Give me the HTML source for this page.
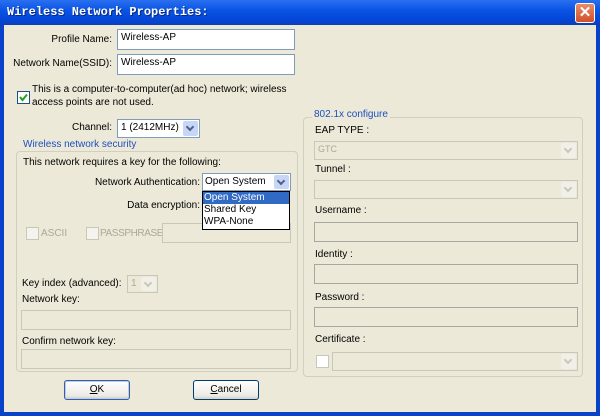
<!DOCTYPE html>
<html><head><style>
*{box-sizing:border-box;margin:0;padding:0}
body{width:600px;height:416px;overflow:hidden;font-family:Tahoma,"Liberation Sans",sans-serif;font-size:10px;color:#000;position:relative;background:#0842c9}
.a{position:absolute}
#title{left:0;top:0;width:600px;height:25px;background:linear-gradient(#2a6ff0,#0a55e4 40%,#0445d8 80%,#0a3fb8);}
#title span{position:absolute;left:7px;top:5px;color:#fff;font-family:"Liberation Mono",monospace;font-weight:bold;font-size:12px;text-shadow:1px 1px #0a2a80}
#close{left:575px;top:3px;width:20px;height:20px;border:1px solid #fff;border-radius:3px;background:linear-gradient(#e88c6a,#d2502a);color:#fff;font-size:15px;font-weight:bold;text-align:center;line-height:18px}
#body{left:4px;top:25px;width:592px;height:387px;background:#ece9d8}
.in{position:absolute;background:#fff;border:1px solid #7f9db9;padding:2px 3px;font-size:10px}
.dis{position:absolute;background:#ece9d8;border:1px solid #c9c7ba}
.lbl{position:absolute;white-space:nowrap}
.r{text-align:right}
.grp{position:absolute;border:1px solid #d0d0bf;border-radius:4px}
.gl{position:absolute;color:#1e4fbf;background:#ece9d8;padding:0 2px;white-space:nowrap}
.arr{position:absolute;right:1px;top:1px;bottom:1px;width:15px;background:#c7d6f7;border-radius:2px}
.arr:after{content:"";position:absolute;left:4px;top:3px;width:4px;height:4px;border-right:2px solid #4d6185;border-bottom:2px solid #4d6185;transform:rotate(45deg)}
.darr{background:#f0efe8}
.darr:after{border-color:#c9c7ba}
.cb{position:absolute;width:13px;height:13px;border:1px solid #1c5180;background:#fff}
.dcb{border-color:#c9c7ba;background:#f4f3ee}
.btn{position:absolute;width:66px;height:20px;border:1px solid #003c74;border-radius:3px;background:linear-gradient(#fff,#ecebe6 80%,#d6d0c5);text-align:center;line-height:18px}
.g{color:#aca899}
</style></head><body>
<div id="title" class="a"><span>Wireless Network Properties:</span></div>
<div id="close" class="a">✕</div>
<div id="body" class="a"></div>

<div class="lbl r" style="right:488px;top:34px">Profile Name:</div>
<div class="in" style="left:117px;top:29px;width:178px;height:21px">Wireless-AP</div>
<div class="lbl r" style="right:488px;top:58px">Network Name(SSID):</div>
<div class="in" style="left:117px;top:54px;width:178px;height:21px">Wireless-AP</div>

<div class="cb" style="left:17px;top:91px"><svg width="11" height="11" style="position:absolute;left:0;top:0"><path d="M2 5 L4.5 8 L9 2.5" stroke="#21a121" stroke-width="2" fill="none"/></svg></div>
<div class="lbl" style="left:32px;top:83px;line-height:13px">This is a computer-to-computer(ad hoc) network; wireless<br>access points are not used.</div>

<div class="lbl r" style="right:488px;top:122px">Channel:</div>
<div class="in" style="left:117px;top:119px;width:83px;height:19px;padding:2px 3px">1 (2412MHz)<div class="arr"></div></div>

<div class="grp" style="left:16px;top:151px;width:282px;height:221px"></div>
<div class="gl" style="left:21px;top:139px">Wireless network security</div>
<div class="lbl" style="left:23px;top:157px">This network requires a key for the following:</div>
<div class="lbl r" style="right:400px;top:177px">Network Authentication:</div>
<div class="in" style="left:202px;top:173px;width:89px;height:18px;padding:2px 2px">Open System<div class="arr"></div></div>
<div class="lbl r" style="right:400px;top:200px">Data encryption:</div>
<div class="cb dcb" style="left:26px;top:227px"></div>
<div class="lbl g" style="left:41px;top:228px">ASCII</div>
<div class="cb dcb" style="left:86px;top:227px"></div>
<div class="lbl g" style="left:100px;top:228px;letter-spacing:-0.4px">PASSPHRASE</div>
<div class="dis" style="left:162px;top:223px;width:129px;height:20px"></div>
<div class="a" style="left:202px;top:191px;width:88px;height:39px;background:#fff;border:1px solid #000;line-height:12px;z-index:5">
<div style="background:#316ac5;color:#fff;padding:0 1px">Open System</div>
<div style="padding:0 1px">Shared Key</div>
<div style="padding:0 1px">WPA-None</div></div>

<div class="lbl" style="left:22px;top:278px">Key index (advanced):</div>
<div class="dis" style="left:127px;top:275px;width:31px;height:18px"><span class="g" style="position:absolute;left:3px;top:2px">1</span><div class="arr darr"></div></div>
<div class="lbl" style="left:22px;top:294px">Network key:</div>
<div class="dis" style="left:21px;top:310px;width:270px;height:20px"></div>
<div class="lbl" style="left:22px;top:336px">Confirm network key:</div>
<div class="dis" style="left:21px;top:349px;width:270px;height:20px"></div>

<div class="grp" style="left:303px;top:117px;width:280px;height:260px"></div>
<div class="gl" style="left:312px;top:109px">802.1x configure</div>
<div class="lbl" style="left:315px;top:125px">EAP TYPE :</div>
<div class="dis" style="left:314px;top:141px;width:264px;height:19px"><span class="g" style="position:absolute;left:3px;top:2px;font-size:9px">GTC</span><div class="arr darr"></div></div>
<div class="lbl" style="left:315px;top:164px">Tunnel :</div>
<div class="dis" style="left:314px;top:180px;width:264px;height:19px"><div class="arr darr"></div></div>
<div class="lbl" style="left:315px;top:205px">Username :</div>
<div class="dis" style="left:314px;top:222px;width:264px;height:20px;border-color:#a7a6a0"></div>
<div class="lbl" style="left:315px;top:249px">Identity :</div>
<div class="dis" style="left:314px;top:264px;width:264px;height:20px;border-color:#a7a6a0"></div>
<div class="lbl" style="left:315px;top:292px">Password :</div>
<div class="dis" style="left:314px;top:307px;width:264px;height:20px;border-color:#a7a6a0"></div>
<div class="lbl" style="left:315px;top:334px">Certificate :</div>
<div class="cb dcb" style="left:316px;top:355px;background:#fff"></div>
<div class="dis" style="left:332px;top:352px;width:246px;height:19px"><div class="arr darr"></div></div>

<div class="btn" style="left:64px;top:380px;border-color:#3d5d9e;box-shadow:inset 0 0 0 1px #b9cdf0"><u>O</u>K</div>
<div class="btn" style="left:193px;top:380px"><u>C</u>ancel</div>
</body></html>
